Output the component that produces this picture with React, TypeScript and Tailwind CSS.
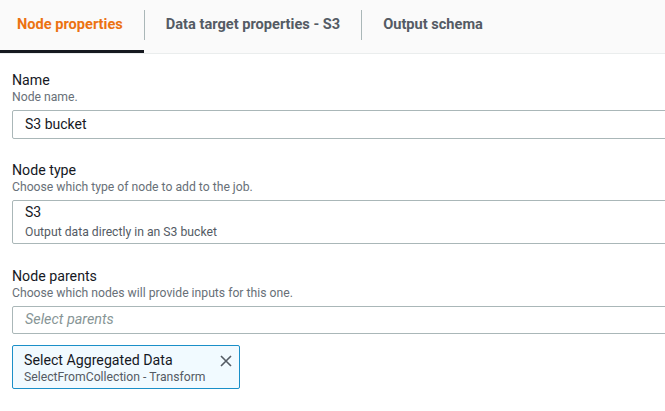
import React from 'react';

const Divider = () => <div className="w-px h-[30px] mt-[10px] bg-[#aab7b8] shrink-0" />;

const Field = ({ label, hint, top, children }: { label: string; hint: string; top: string; children: React.ReactNode }) => (
  <div className={top}>
    <div className="text-[14.2px] leading-[18px] text-[#16191f]">{label}</div>
    <div className="text-[12.2px] leading-4 text-[#687078]">{hint}</div>
    <div className="mt-[5px]">{children}</div>
  </div>
);

const App = () => {
  return (
    <div className="w-[665px] h-[411px] overflow-hidden bg-white font-['Roboto',sans-serif]">
      {/* Tabs */}
      <div className="flex h-[54px] bg-[#fafafa] border-b border-[#eaeded]">
        <div className="flex items-center pl-[17px] pr-[21px] border-b-[3px] border-[#16191f] text-[14.6px] font-bold text-[#ec7211] shrink-0">
          Node properties
        </div>
        <Divider />
        <div className="flex items-center px-[21px] pb-[3px] text-[14.6px] font-bold text-[#545b64] shrink-0">
          Data target properties - S3
        </div>
        <Divider />
        <div className="flex items-center px-[21px] pb-[3px] text-[14.6px] font-bold text-[#545b64] shrink-0">
          Output schema
        </div>
      </div>

      {/* Form */}
      <div className="w-[720px] px-3">
        <Field label="Name" hint="Node name." top="pt-[17px]">
          <div className="h-[29px] flex items-center pl-3 border border-[#aab7b8] rounded-[2px] text-[14px] text-[#16191f]">
            S3 bucket
          </div>
        </Field>

        <Field label="Node type" hint="Choose which type of node to add to the job." top="pt-[22px]">
          <div className="h-[44px] pl-3 pt-[1px] border border-[#aab7b8] rounded-[2px]">
            <div className="text-[14px] leading-5 text-[#16191f]">S3</div>
            <div className="mt-[2px] text-[12.2px] leading-4 text-[#545b64]">Output data directly in an S3 bucket</div>
          </div>
        </Field>

        <Field label="Node parents" hint="Choose which nodes will provide inputs for this one." top="pt-[23px]">
          <div className="h-[28px] flex items-center pl-3 border border-[#aab7b8] rounded-[2px] text-[14.4px] italic text-[#879596]">
            Select parents
          </div>
        </Field>

        <div className="mt-[11px] w-[228px] h-[44px] flex justify-between pl-[11px] pr-[7px] pt-[5px] pb-[3px] border border-[#1a8fc8] rounded-[2px] bg-[#f1faff]">
          <div>
            <div className="text-[14.2px] leading-[18px] text-[#16191f]">Select Aggregated Data</div>
            <div className="text-[12.2px] leading-4 text-[#545b64]">SelectFromCollection - Transform</div>
          </div>
          <svg width="12" height="12" viewBox="0 0 12 12" className="mt-[4px]" fill="none" stroke="#545b64" strokeWidth="1.6">
            <path d="M1 1 L11 11 M11 1 L1 11" />
          </svg>
        </div>
      </div>
    </div>
  );
};

export default App;
